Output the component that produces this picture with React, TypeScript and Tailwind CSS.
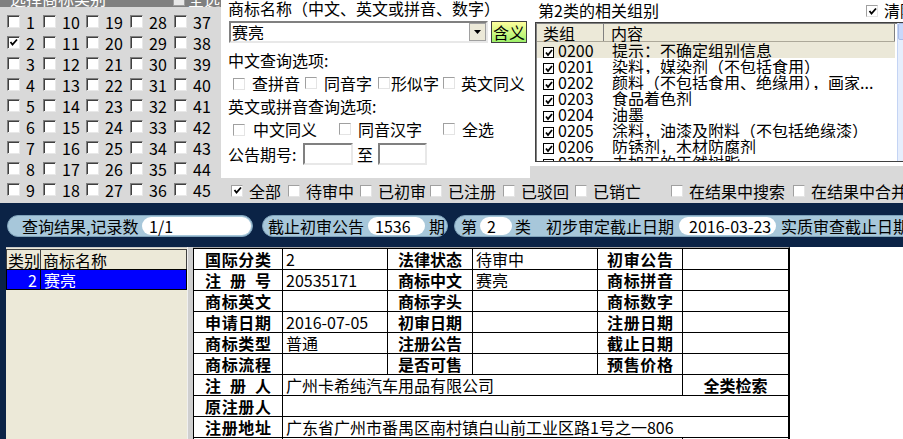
import React from "react";

type CkProps = { on?: boolean; small?: boolean };

// classic sunken checkbox
const Ck = ({ on = false, small = false }: CkProps) => (
  <span
    className={
      small
        ? "inline-flex items-center justify-center w-[12px] h-[12px] shrink-0 bg-white border border-t-[#a0a0a0] border-l-[#a0a0a0] border-r-[#e4e4e4] border-b-[#e4e4e4]"
        : "inline-flex items-center justify-center w-[13px] h-[13px] shrink-0 bg-white border border-t-[#808080] border-l-[#808080] border-r-[#e8e8e8] border-b-[#e8e8e8] shadow-[inset_1px_1px_0_#404040]"
    }
  >
    {on && (
      <svg width="9" height="9" viewBox="0 0 9 9">
        <path d="M1.5 4 L3.5 6.5 L8 1.5" fill="none" stroke="#000" strokeWidth="1.8" />
      </svg>
    )}
  </span>
);

// xp style listview checkbox
const XpCk = () => (
  <span className="inline-flex items-center justify-center w-[11px] h-[11px] shrink-0 bg-white border-[1.5px] border-black">
    <svg width="8" height="8" viewBox="0 0 8 8">
      <path d="M1 3.5 L3 6 L7 1" fill="none" stroke="#000" strokeWidth="1.8" />
    </svg>
  </span>
);

const colW = ["w-[36px]", "w-[43px]", "w-[44px]", "w-[44px]", "w-[40px]"];

const filters = [
  { t: "全部", on: true, w: "w-[57px]" },
  { t: "待审中", on: false, w: "w-[72px]" },
  { t: "已初审", on: false, w: "w-[70px]" },
  { t: "已注册", on: false, w: "w-[73px]" },
  { t: "已驳回", on: false, w: "w-[72px]" },
  { t: "已销亡", on: false, w: "w-[96px]" },
  { t: "在结果中搜索", on: false, w: "w-[122px]" },
  { t: "在结果中合并", on: false, w: "w-[120px]" },
];

const groups = [
  ["0200", "提示：不确定组别信息"],
  ["0201", "染料，媒染剂（不包括食用）"],
  ["0202", "颜料（不包括食用、绝缘用），画家..."],
  ["0203", "食品着色剂"],
  ["0204", "油墨"],
  ["0205", "涂料，油漆及附料（不包括绝缘漆）"],
  ["0206", "防锈剂，木材防腐剂"],
  ["0207", "未加工的天然树脂"],
];

// bold label cell, characters spread over the cell
const Lbl = ({ t, px = "px-[11px]" }: { t: string; px?: string }) => (
  <td className={`border border-black ${px} align-middle`}>
    <div className="flex justify-between font-bold text-[16px] leading-[19px]">
      {t.split("").map((c, i) => (
        <span key={i}>{c}</span>
      ))}
    </div>
  </td>
);

const Val = ({ t = "", span = 1 }: { t?: string; span?: number }) => (
  <td colSpan={span} className="border border-black pl-[3px] text-[16px] leading-[19px] align-middle whitespace-nowrap overflow-hidden">
    {t}
  </td>
);

const Pill = ({ children, className = "" }: { children: React.ReactNode; className?: string }) => (
  <div className={`h-[22px] shrink-0 rounded-full bg-[#a7c7da] border border-[#7fa3bb] flex items-center text-[16px] leading-[18px] ${className}`}>
    {children}
  </div>
);

const PillInput = ({ t, className = "" }: { t: string; className?: string }) => (
  <div className={`h-[18px] shrink-0 rounded-full bg-white flex items-center ${className}`}>{t}</div>
);

export default function App() {
  return (
    <div className="w-[903px] h-[439px] overflow-hidden bg-[#0b2346] text-black font-['Noto_Sans_CJK_SC','Noto_Sans',sans-serif]">
      {/* top area */}
      <div className="flex h-[203px]">
        {/* class picker */}
        <div className="w-[221px] shrink-0 bg-[#d9d9d9] flex flex-col">
          <div className="h-[7px] bg-[#808080] overflow-hidden flex text-white text-[16px] leading-[16px]">
            <div className="-mt-[10px] pl-[10px] w-[173px] shrink-0">选择商标类别</div>
            <div className="-mt-[8px] flex items-center gap-[3px]">
              <span className="w-[12px] h-[12px] bg-[#e8e8e8] border border-[#a0a0a0]" />
              <span className="-mt-[2px]">全选</span>
            </div>
          </div>
          <div className="pt-[4px] pl-[7px]">
            {[1, 2, 3, 4, 5, 6, 7, 8, 9].map((r) => (
              <div key={r} className="flex h-[21px] items-center">
                {colW.map((w, c) => (
                  <div key={c} className={`${w} shrink-0 flex items-center gap-[6px]`}>
                    <Ck on={r === 2 && c === 0} />
                    <span className="text-[16px] leading-[18px]">{r + c * 9}</span>
                  </div>
                ))}
              </div>
            ))}
          </div>
        </div>

        <div className="flex-1 min-w-0 flex flex-col">
          <div className="flex h-[178px]">
            {/* name + options */}
            <div className="w-[309px] shrink-0 bg-white pl-[7px] flex flex-col text-[16px] leading-[18px] whitespace-nowrap">
              <div className="h-[21px] -mt-[4px] pt-[3px]">商标名称（中文、英文或拼音、数字）</div>
              <div className="flex h-[22px] mt-[4px]">
                <div className="w-[259px] h-[22px] ml-[1px] bg-white border-2 border-t-[#808080] border-l-[#808080] border-r-[#e8e8e8] border-b-[#e8e8e8] flex items-center">
                  <span className="pl-[1px] flex-1">赛亮</span>
                  <span className="w-[17px] h-[18px] bg-[#ece9d8] border border-[#a0a0a0] flex items-center justify-center">
                    <svg width="7" height="4" viewBox="0 0 7 4">
                      <path d="M0 0 H7 L3.5 4 Z" fill="#000" />
                    </svg>
                  </span>
                </div>
                <div className="ml-[3px] w-[36px] h-[22px] border border-[#404040] bg-gradient-to-b from-[#ffff9c] to-[#9cf06a] flex items-center justify-center">
                  含义
                </div>
              </div>
              <div className="h-[23px] mt-[5px] flex items-center">中文查询选项:</div>
              <div className="h-[23px] flex items-center">
                <span className="ml-[5px]"><Ck small /></span>
                <span className="ml-[7px] w-[53px]">查拼音</span>
                <Ck small />
                <span className="ml-[7px] w-[54px]">同音字</span>
                <Ck small />
                <span className="ml-[1px] w-[52px]">形似字</span>
                <Ck small />
                <span className="ml-[6px]">英文同义</span>
              </div>
              <div className="h-[23px] flex items-center">英文或拼音查询选项:</div>
              <div className="h-[23px] flex items-center">
                <span className="ml-[5px]"><Ck small /></span>
                <span className="ml-[8px] w-[86px]">中文同义</span>
                <Ck small />
                <span className="ml-[7px] w-[85px]">同音汉字</span>
                <Ck small />
                <span className="ml-[7px]">全选</span>
              </div>
              <div className="h-[22px] mt-[3px] flex items-center">
                <span className="w-[75px]">公告期号:</span>
                <span className="w-[50px] h-[22px] border-2 border-t-[#808080] border-l-[#808080] border-r-[#e8e8e8] border-b-[#e8e8e8]" />
                <span className="ml-[4px] w-[21px]">至</span>
                <span className="w-[49px] h-[22px] border-2 border-t-[#808080] border-l-[#808080] border-r-[#e8e8e8] border-b-[#e8e8e8]" />
              </div>
            </div>

            {/* related groups */}
            <div className="flex-1 min-w-0 flex flex-col bg-[#d9d9d9] overflow-hidden">
              <div className="h-[166px] bg-white flex flex-col">
                <div className="h-[22px] flex items-center text-[16px] leading-[18px] whitespace-nowrap">
                  <span className="pl-[8px] w-[336px] shrink-0 -mt-[3px]">第2类的相关组别</span>
                  <Ck small on />
                  <span className="ml-[6px] -mt-[3px]">清除</span>
                </div>
                <div className="ml-[5px] w-[385px] shrink-0 h-[140px] border border-[#404040] shadow-[inset_1px_1px_0_#808080] flex overflow-hidden">
                  <div className="w-[358px] shrink-0 ml-[1px] mt-[1px] flex flex-col text-[16px] leading-[16px]">
                    <div className="h-[18px] shrink-0 flex bg-[#ece9d8] border-b border-[#aca899]">
                      <div className="w-[67px] pl-[6px] border-r border-[#808080] flex items-center">类组</div>
                      <div className="flex-1 pl-[7px] border-r border-[#808080] flex items-center">内容</div>
                    </div>
                    {groups.map(([code, text], i) => (
                      <div key={code} className={`h-[16px] shrink-0 flex items-center whitespace-nowrap ${i === 0 ? "bg-[#ebe8d8]" : "bg-white"}`}>
                        <span className="ml-[6px]"><XpCk /></span>
                        <span className="ml-[4px] w-[54px] shrink-0">{code}</span>
                        <span>{text}</span>
                      </div>
                    ))}
                  </div>
                  <div className="w-[17px] shrink-0 ml-[2px] bg-[#e6eefc] border-l border-[#c4d4f4] flex flex-col">
                    <div className="h-[17px] bg-[#c8d8fa] border border-[#a8bce8] rounded-[2px]" />
                  </div>
                </div>
              </div>
            </div>
          </div>

          {/* status filters */}
          <div className="h-[25px] bg-[#d9d9d9] flex items-center pl-[10px] text-[16px] leading-[18px] whitespace-nowrap overflow-hidden">
            {filters.map((f) => (
              <div key={f.t} className={`${f.w} shrink-0 flex items-center gap-[6px]`}>
                <Ck small on={f.on} />
                <span>{f.t}</span>
              </div>
            ))}
          </div>
        </div>
      </div>

      {/* result bar */}
      <div className="h-[44px] pt-[12px] flex whitespace-nowrap overflow-hidden">
        <Pill className="ml-[7px] w-[246px]">
          <span className="pl-[14px]">查询结果,记录数</span>
          <PillInput t="1/1" className="ml-auto mr-[1px] w-[109px] pl-[7px]" />
        </Pill>
        <Pill className="ml-[9px] pr-[2px]">
          <span className="pl-[5px]">截止初审公告</span>
          <PillInput t="1536" className="ml-[4px] w-[57px] pl-[7px]" />
          <span className="ml-[4px]">期</span>
        </Pill>
        <Pill className="ml-[6px] w-[480px]">
          <span className="pl-[6px]">第</span>
          <PillInput t="2" className="ml-[3px] w-[32px] pl-[7px]" />
          <span className="ml-[3px]">类</span>
          <span className="ml-[15px]">初步审定截止日期</span>
          <PillInput t="2016-03-23" className="ml-[5px] w-[97px] pl-[10px]" />
          <span className="ml-[5px]">实质审查截止日期</span>
        </Pill>
      </div>

      {/* results */}
      <div className="flex h-[192px]">
        <div className="w-[6px] shrink-0" />
        <div className="w-[181px] shrink-0 bg-[#ece9d8] border-t border-[#c8c8c8] text-[16px] leading-[18px]">
          <div className="h-[21px] flex mt-[1px] border border-[#404040] bg-[#ece9d8]">
            <div className="w-[34px] pl-[1px] border-r border-[#404040] flex items-center">类别</div>
            <div className="flex-1 pl-[2px] flex items-center">商标名称</div>
          </div>
          <div className="h-[21px] flex -mt-[1px] border border-black bg-[#0000ff] text-white">
            <div className="w-[34px] pr-[3px] border-r border-black flex items-center justify-end">2</div>
            <div className="flex-1 pl-[3px] flex items-center">赛亮</div>
          </div>
        </div>
        <div className="w-[6px] shrink-0 bg-[#cfcfcf] border-l border-[#f0f0f0]" />
        <div className="w-[597px] shrink-0 bg-white border-t border-[#a8a8a8] border-r-2 border-r-black">
          <table className="table-fixed border-collapse w-[595px]">
            <colgroup>
              <col className="w-[89px]" />
              <col className="w-[105px]" />
              <col className="w-[85px]" />
              <col className="w-[125px]" />
              <col className="w-[85px]" />
              <col className="w-[106px]" />
            </colgroup>
            <tbody>
              <tr className="h-[21px]">
                <Lbl t="国际分类" /><Val t="2" /><Lbl t="法律状态" px="px-[10px]" /><Val t="待审中" /><Lbl t="初审公告" px="px-[9px]" /><Val />
              </tr>
              <tr className="h-[21px]">
                <Lbl t="注册号" /><Val t="20535171" /><Lbl t="商标中文" px="px-[10px]" /><Val t="赛亮" /><Lbl t="商标拼音" px="px-[9px]" /><Val />
              </tr>
              <tr className="h-[21px]">
                <Lbl t="商标英文" /><Val /><Lbl t="商标字头" px="px-[10px]" /><Val /><Lbl t="商标数字" px="px-[9px]" /><Val />
              </tr>
              <tr className="h-[21px]">
                <Lbl t="申请日期" /><Val t="2016-07-05" /><Lbl t="初审日期" px="px-[10px]" /><Val /><Lbl t="注册日期" px="px-[9px]" /><Val />
              </tr>
              <tr className="h-[21px]">
                <Lbl t="商标类型" /><Val t="普通" /><Lbl t="注册公告" px="px-[10px]" /><Val /><Lbl t="截止日期" px="px-[9px]" /><Val />
              </tr>
              <tr className="h-[21px]">
                <Lbl t="商标流程" /><Val /><Lbl t="是否可售" px="px-[10px]" /><Val /><Lbl t="预售价格" px="px-[9px]" /><Val />
              </tr>
              <tr className="h-[21px]">
                <Lbl t="注册人" />
                <Val t="广州卡希纯汽车用品有限公司" span={4} />
                <td className="border border-black text-center font-bold text-[16px] leading-[19px]">全类检索</td>
              </tr>
              <tr className="h-[21px]">
                <Lbl t="原注册人" /><Val span={5} />
              </tr>
              <tr className="h-[21px]">
                <Lbl t="注册地址" /><Val t="广东省广州市番禺区南村镇白山前工业区路1号之一806" span={5} />
              </tr>
              <tr className="h-[21px]">
                <Lbl t="代理机构" /><Val span={4} /><Val />
              </tr>
            </tbody>
          </table>
        </div>
        <div className="flex-1 bg-white" />
      </div>
    </div>
  );
}
